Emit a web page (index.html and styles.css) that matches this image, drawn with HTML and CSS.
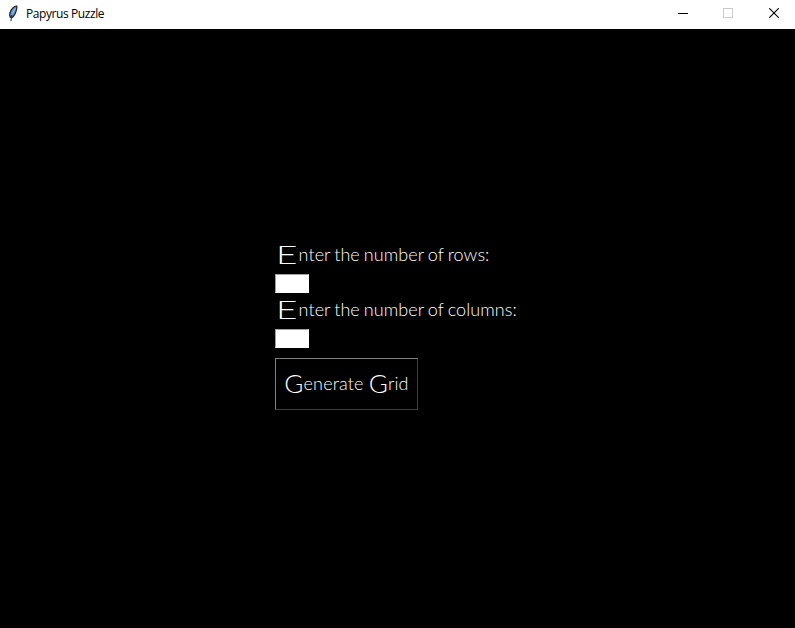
FILE: index.html
```
<!DOCTYPE html>
<html lang="en">
<head>
<meta charset="utf-8">
<title>Papyrus Puzzle</title>
<link rel="stylesheet" href="styles.css">
</head>
<body>
<header class="titlebar">
  <svg class="feather" width="12" height="18" viewBox="0 0 12 18">
    <path d="M9.8 2C7.3 1.8 4 5 3 8.8C2.4 10.6 2.6 12 3.2 13.2L5 13.6C7.4 12 8.6 9 9.3 6.3C9.8 4.6 10.1 3 9.8 2Z" fill="#5c92cf" stroke="#1c2026" stroke-width="1.2"/>
    <path d="M4.8 11L3.9 17" fill="none" stroke="#2a2a2a" stroke-width="1"/>
    <path d="M8.3 4.5L5.4 9.5" stroke="#a5cdf2" stroke-width="1"/>
  </svg>
  <span class="title">Papyrus Puzzle</span>
  <div class="controls">
    <svg width="10" height="10" viewBox="0 0 10 10" overflow="visible"><path d="M1 5.5H11" stroke="#000"/></svg>
    <svg width="10" height="10" viewBox="0 0 10 10"><rect x=".5" y=".5" width="9" height="9" fill="none" stroke="#ccc"/></svg>
    <svg width="10" height="10" viewBox="0 0 10 10"><path d="M.3 .3L9.7 9.7M9.7 .3L.3 9.7" stroke="#000" stroke-width="1.1"/></svg>
  </div>
</header>
<main class="stage">
  <form class="form">
    <label class="label" for="rows"><span class="cap cap-e">E</span>nter the number of rows:</label>
    <input class="entry" id="rows" type="text">
    <label class="label" for="cols"><span class="cap cap-e">E</span>nter the number of columns:</label>
    <input class="entry" id="cols" type="text">
    <button class="generate" type="button"><span class="cap">G</span>enerate <span class="cap">G</span>rid</button>
  </form>
</main>
</body>
</html>
```
FILE: styles.css
```
* { box-sizing: border-box; }
body {
  margin: 0;
  width: 795px;
  height: 628px;
  overflow: hidden;
  background: #000;
  display: flex;
  flex-direction: column;
}
.titlebar {
  height: 29px;
  flex: none;
  background: #fff;
  display: flex;
  align-items: center;
  padding: 0 16px 3px 7px;
  font: 12px "Open Sans", "Noto Sans", sans-serif;
  color: #000;
}
.feather { flex: none; }
.title { margin-left: 7px; letter-spacing: -0.42px; }
.controls { margin-left: auto; display: flex; gap: 36px; }
.controls svg { display: block; }
.stage { flex: 1; padding: 210px 0 0 275px; }
.form {
  display: flex;
  flex-direction: column;
  align-items: flex-start;
}
.label, .generate {
  font-family: Lato, "Open Sans", sans-serif;
  font-weight: 300;
  font-size: 18px;
  color: #fff;
  white-space: nowrap;
}
.label {
  height: 35px;
  padding-left: 1px;
  line-height: 30px;
  word-spacing: -1px;
  letter-spacing: 0.08px;
}
.cap {
  display: inline-block;
  font-size: 26px;
  line-height: 1;
  vertical-align: -3px;
}
.cap-e { transform: scaleX(1.42); transform-origin: left; margin-right: 7.4px; }
.entry {
  width: 34px;
  height: 19px;
  margin: 0 0 1px;
  padding: 0 2px;
  border: 1px solid;
  border-color: #a0a0a0 #fff #fff #a0a0a0;
  border-radius: 0;
  background: #fff;
}
.generate {
  width: 143px;
  height: 52px;
  margin-top: 9px;
  padding: 0 0 2px;
  border: 1px solid;
  border-color: #808080 #404040 #404040 #808080;
  background: #000;
  letter-spacing: 0.15px;
}
```
